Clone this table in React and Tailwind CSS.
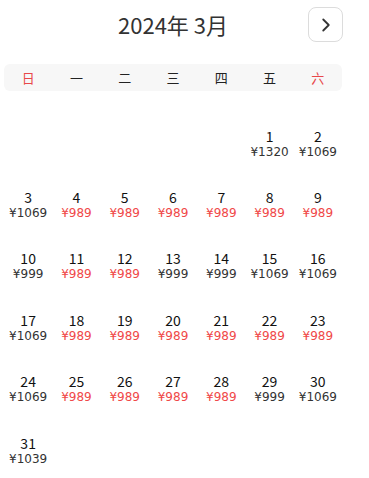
import { ChevronRight } from 'lucide-react'

const WEEK = ['日', '一', '二', '三', '四', '五', '六']

const PRICES = {
  1: 1320, 2: 1069, 3: 1069, 4: 989, 5: 989, 6: 989, 7: 989, 8: 989, 9: 989,
  10: 999, 11: 989, 12: 989, 13: 999, 14: 999, 15: 1069, 16: 1069,
  17: 1069, 18: 989, 19: 989, 20: 989, 21: 989, 22: 989, 23: 989,
  24: 1069, 25: 989, 26: 989, 27: 989, 28: 989, 29: 999, 30: 1069, 31: 1039,
}

// March 2024 starts on Friday
const FIRST = 5
const DAYS = 31

export default function App() {
  const cells = []
  for (let i = 0; i < FIRST; i++) cells.push(null)
  for (let d = 1; d <= DAYS; d++) cells.push(d)

  return (
    <div className="w-[369px] h-[478px] bg-white overflow-hidden" style={{ fontFamily: '"Noto Sans CJK SC", "Noto Sans", sans-serif' }}>
      <div className="ml-1 w-[338px]">
        {/* Header */}
        <div className="relative h-[49px] flex items-center justify-center">
          <h1 className="text-[22px] text-[#333]">2024年 3月</h1>
          <button className="absolute right-[-1px] top-[7px] w-[35px] h-[35px] flex items-center justify-center rounded-lg border border-[#dcdcdc] bg-white text-[#333]">
            <ChevronRight size={22} strokeWidth={2} />
          </button>
        </div>

        {/* Weekdays */}
        <div className="mt-[15px] grid grid-cols-7 h-[27px] items-center rounded-md bg-[#f7f7f7] text-[13px]">
          {WEEK.map((w, i) => (
            <div key={w} className={`text-center ${i === 0 || i === 6 ? 'text-[#e8484a]' : 'text-[#222]'}`}>{w}</div>
          ))}
        </div>

        {/* Days */}
        <div className="mt-[22px] grid grid-cols-7">
          {cells.map((d, i) => (
            <div key={i} className="h-[61.4px] flex flex-col items-center justify-center">
              {d && (
                <>
                  <span className="text-[14px] leading-[16px] text-[#111]">{d}</span>
                  <span
                    className={`text-[12px] leading-[16px] font-['DejaVu_Sans',sans-serif] ${PRICES[d] === 989 ? 'text-[#f04848]' : 'text-[#333]'}`}
                  >
                    ¥{PRICES[d]}
                  </span>
                </>
              )}
            </div>
          ))}
        </div>
      </div>
    </div>
  )
}
